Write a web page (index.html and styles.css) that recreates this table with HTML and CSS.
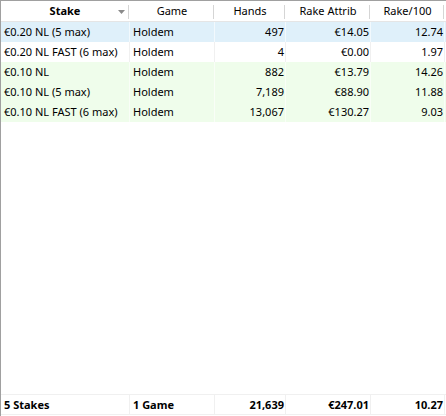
FILE: index.html
```html
<!DOCTYPE html>
<html>
<head>
<meta charset="utf-8">
<link rel="stylesheet" href="styles.css">
</head>
<body>
<div class="table">
  <div class="row head">
    <div class="cell hc sortcell"><span class="sp"></span><span class="b">Stake</span><svg class="arrow" width="7" height="4" viewBox="0 0 7 4"><path d="M0 0H7L3.5 4Z" fill="#8a8a8a"/></svg></div>
    <div class="cell hc">Game</div>
    <div class="cell hc">Hands</div>
    <div class="cell hc">Rake Attrib</div>
    <div class="cell hc">Rake/100</div>
  </div>
  <div class="row data blue">
    <div class="cell l">€0.20 NL (5 max)</div><div class="cell l g">Holdem</div><div class="cell r">497</div><div class="cell r">€14.05</div><div class="cell r">12.74</div>
  </div>
  <div class="row data white">
    <div class="cell l">€0.20 NL FAST (6 max)</div><div class="cell l g">Holdem</div><div class="cell r">4</div><div class="cell r">€0.00</div><div class="cell r">1.97</div>
  </div>
  <div class="row data green">
    <div class="cell l">€0.10 NL</div><div class="cell l g">Holdem</div><div class="cell r">882</div><div class="cell r">€13.79</div><div class="cell r">14.26</div>
  </div>
  <div class="row data green">
    <div class="cell l">€0.10 NL (5 max)</div><div class="cell l g">Holdem</div><div class="cell r">7,189</div><div class="cell r">€88.90</div><div class="cell r">11.88</div>
  </div>
  <div class="row data green">
    <div class="cell l">€0.10 NL FAST (6 max)</div><div class="cell l g">Holdem</div><div class="cell r">13,067</div><div class="cell r">€130.27</div><div class="cell r">9.03</div>
  </div>
  <div class="spacer"></div>
  <div class="row foot">
    <div class="cell l">5 Stakes</div><div class="cell l g">1 Game</div><div class="cell r">21,639</div><div class="cell r">€247.01</div><div class="cell r">10.27</div>
  </div>
</div>
</body>
</html>
```
FILE: styles.css
```css
html, body {
  margin: 0;
  padding: 0;
  background: #ffffff;
}
body {
  font-family: "Noto Sans", "Open Sans", sans-serif;
  font-size: 11px;
  color: #000000;
}
.table {
  display: flex;
  flex-direction: column;
  width: 446px;
  height: 416px;
  box-sizing: border-box;
  border-left: 1px solid #a0a0a0;
}
.row {
  display: grid;
  grid-template-columns: 129px 85px 71px 85px 74px;
}
.cell {
  box-sizing: border-box;
  border-right: 1px solid transparent;
  white-space: nowrap;
  overflow: hidden;
}
.head {
  border-top: 1px solid #a0a0a0;
  border-bottom: 1px solid #e5e5e5;
  height: 22px;
  box-sizing: border-box;
  background: #ffffff;
}
.hc {
  line-height: 20px;
  text-align: center;
  background: linear-gradient(#d5d5d5, #d5d5d5) no-repeat right 0 top 4px / 1px 14px;
}
.sortcell {
  display: grid;
  grid-template-columns: 1fr auto 1fr;
  align-items: center;
}
.sortcell .arrow {
  justify-self: end;
  margin-right: 4px;
  margin-top: 2px;
}
.b {
  font-weight: bold;
}
.data {
  height: 20px;
  line-height: 20px;
}
.data .cell {
  border-right-color: rgba(255, 255, 255, 0.6);
}
.white .cell {
  border-right-color: #f0f0f0;
}
.blue {
  background: #dff0fa;
}
.green {
  background: #effdeb;
}
.white {
  background: #ffffff;
}
.l {
  padding-left: 3px;
}
.l.g {
  padding-left: 3px;
}
.r {
  text-align: right;
  padding-right: 1px;
}
.spacer {
  flex: 1;
}
.foot {
  height: 21px;
  box-sizing: border-box;
  border-top: 1px solid #f0f0f0;
  border-bottom: 1px solid #f0f0f0;
  margin-bottom: 1px;
  line-height: 19px;
  font-weight: bold;
}
.foot .cell {
  border-right-color: #f0f0f0;
}
```
